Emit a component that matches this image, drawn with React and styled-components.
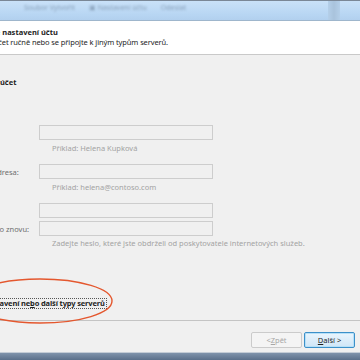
import styled, { createGlobalStyle } from 'styled-components';

const GlobalStyle = createGlobalStyle`
  html, body { margin: 0; padding: 0; }
  body {
    font-family: "Noto Sans", "Open Sans", sans-serif;
    background: #f0f0f0;
  }
`;

const Window = styled.div`
  position: relative;
  width: 360px;
  height: 360px;
  overflow: hidden;
  display: flex;
  flex-direction: column;
  background: #f0f0f0;
  font-size: 7.5px;
  color: #1e1e1e;
`;

const TitleBar = styled.div`
  height: 19px;
  flex: none;
  display: flex;
  align-items: flex-start;
  gap: 14px;
  padding: 0 0 0 24px;
  border-top: 1px solid #7a8796;
  background: linear-gradient(#c9e1f8, #b8d6f3 70%, #b2d0ee);
  border-bottom: 1px solid #9fb6cc;
`;

const Faded = styled.span`
  margin-top: 2px;
  color: #8aa2bb;
  font-size: 7px;
  filter: blur(1px);
  white-space: nowrap;
`;

const FrameEdge = styled.div`
  margin-left: auto;
  margin-right: 20px;
  width: 12px;
  height: 100%;
  background: linear-gradient(90deg, #b4cfe9, #a9c3dc, #b4cfe9);
`;

const Header = styled.div`
  height: 34px;
  flex: none;
  background: #fff;
  border-bottom: 1px solid #c9c9c9;
  display: flex;
  flex-direction: column;
  padding-top: 7px;
  box-sizing: border-box;
`;

const Title = styled.div`
  font-weight: 700;
  margin-left: ${p => p.$indent}px;
  line-height: 9px;
  white-space: nowrap;
`;

const Subtitle = styled.div`
  margin-left: ${p => p.$indent}px;
  line-height: 10px;
  white-space: nowrap;
  letter-spacing: -0.1px;
`;

const Body = styled.div`
  flex: 1;
  display: flex;
  flex-direction: column;
  padding-top: 22px;
`;

const Section = styled.div`
  font-weight: 700;
  line-height: 10px;
  margin-left: ${p => p.$indent}px;
  white-space: nowrap;
`;

const Form = styled.div`
  display: flex;
  flex-direction: column;
  margin-top: 38px;
  margin-left: -43px;
`;

const Row = styled.div`
  display: grid;
  grid-template-columns: 82px 174px;
  align-items: center;
  margin-top: ${p => p.$top || 0}px;
`;

const Label = styled.div`
  color: #6f6f6f;
  white-space: nowrap;
`;

const Input = styled.div`
  height: 15px;
  box-sizing: border-box;
  border: 1px solid #cdcdcd;
  background: #f0f0f0;
`;

const Hint = styled.div`
  margin: ${p => p.$top || 3}px 0 0 95px;
  color: #a3a3a3;
  line-height: 10px;
  white-space: nowrap;
`;

const Option = styled.div`
  margin-top: 50px;
  margin-left: -54px;
  display: flex;
  align-items: center;
  gap: 4px;
`;

const Radio = styled.span`
  width: 9px;
  height: 9px;
  border-radius: 50%;
  border: 1px solid #8a8a8a;
  background: #f4f4f4;
`;

const Focus = styled.span`
  font-weight: 700;
  line-height: 9px;
  padding: 0 1px;
  outline: 1px dotted #555;
  white-space: nowrap;
  letter-spacing: -0.15px;
  u { text-decoration: underline; }
`;

const Ring = styled.svg`
  position: absolute;
  left: -40px;
  top: 276px;
  width: 160px;
  height: 50px;
  pointer-events: none;
`;

const Footer = styled.div`
  flex: none;
  height: 32px;
  border-top: 1px solid #c4c4c4;
  display: flex;
  justify-content: flex-end;
  align-items: flex-start;
  gap: 2px;
  padding: 11px 5px 0 0;
  box-sizing: border-box;
`;

const Button = styled.div`
  width: 51px;
  height: 16px;
  box-sizing: border-box;
  display: flex;
  align-items: center;
  justify-content: center;
  border-radius: 2px;
  border: 1px solid ${p => (p.$primary ? '#3c90c9' : '#cbcbcb')};
  background: ${p => (p.$primary ? 'linear-gradient(#eaf5fd, #cfe6f7)' : '#f4f4f4')};
  box-shadow: ${p => (p.$primary ? 'inset 0 0 0 1px #b6e0f8' : 'none')};
  color: ${p => (p.$primary ? '#1e1e1e' : '#a7a7a7')};
  u { text-decoration: underline; }
`;

const TaskBar = styled.div`
  flex: none;
  height: 7px;
  border-top: 1px solid #c4ccd6;
  background: linear-gradient(#7f93ab, #5b708b);
`;

export default function App() {
  return (
    <Window>
      <GlobalStyle />
      <TitleBar>
        <Faded>Soubor Vytvořit</Faded>
        <Faded>▣ Nastavení účtu</Faded>
        <Faded>Odeslat</Faded>
        <FrameEdge />
      </TitleBar>
      <Header>
        <Title $indent={-48}>Automatické nastavení účtu</Title>
        <Subtitle $indent={-38.5}>Nastavte účet ručně nebo se připojte k jiným typům serverů.</Subtitle>
      </Header>
      <Body>
        <Section $indent={-38}>E-mailový účet</Section>
        <Form>
          <Row>
            <Label>Vaše jméno:</Label>
            <Input />
          </Row>
          <Hint>Příklad: Helena Kupková</Hint>
          <Row $top={11}>
            <Label>E-mailová adresa:</Label>
            <Input />
          </Row>
          <Hint>Příklad: helena@contoso.com</Hint>
          <Row $top={11}>
            <Label>Heslo:</Label>
            <Input />
          </Row>
          <Row $top={3}>
            <Label>Zadejte heslo znovu:</Label>
            <Input />
          </Row>
          <Hint $top={2}>Zadejte heslo, které jste obdrželi od poskytovatele internetových služeb.</Hint>
        </Form>
        <Option>
          <Radio />
          <Focus>Ruční nastavení ne<u>b</u>o další typy serverů</Focus>
        </Option>
      </Body>
      <Footer>
        <Button>&lt; <u>Z</u>pět</Button>
        <Button $primary><u>D</u>alší &gt;</Button>
      </Footer>
      <TaskBar />
      <Ring viewBox="0 0 160 50">
        <ellipse cx="80" cy="25" rx="72" ry="22" fill="none" stroke="#e4572e" strokeWidth="1.4" />
      </Ring>
    </Window>
  );
}
